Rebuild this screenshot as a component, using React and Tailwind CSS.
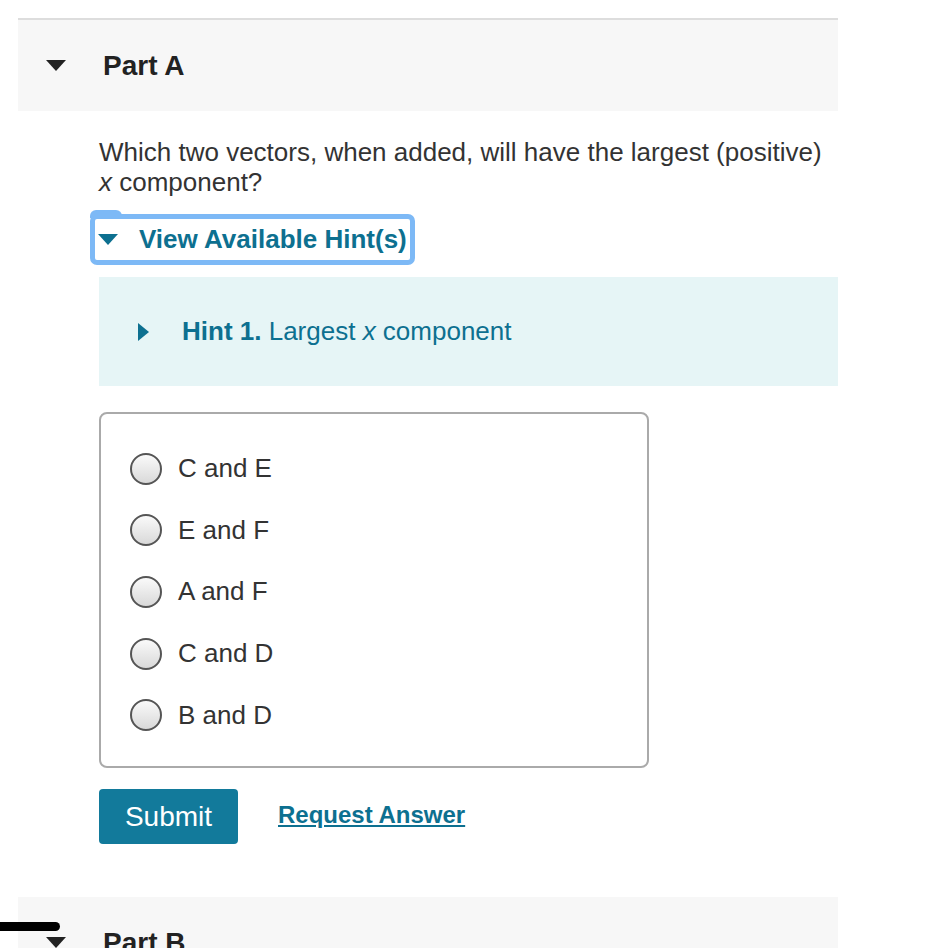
const font = { fontFamily: '"Liberation Sans", Arial, sans-serif' };

const DownTri = ({ className = "" }) => (
  <svg width="20" height="11" viewBox="0 0 20 11" className={className}>
    <path d="M0 0 L20 0 L10 11 Z" fill="currentColor" />
  </svg>
);

const RightTri = () => (
  <svg width="11" height="18" viewBox="0 0 11 18">
    <path d="M0 0 L11 9 L0 18 Z" fill="currentColor" />
  </svg>
);

const choices = ["C and E", "E and F", "A and F", "C and D", "B and D"];

const PartHeader = ({ label }) => (
  <div className="flex items-center h-[91px] bg-[#f7f7f7]">
    <div className="w-[85px] pl-[28px] text-[#222]">
      <DownTri />
    </div>
    <span className="text-[28px] font-bold text-[#222]">{label}</span>
  </div>
);

export default function App() {
  return (
    <div className="relative bg-white w-[939px] h-[948px] overflow-hidden" style={font}>
      <div className="ml-[18px] w-[820px] mt-[18px] border-t-2 border-[#dddddd]">
        <PartHeader label="Part A" />

        <div className="pl-[81px]">
          <p className="mt-[26px] text-[26px] leading-[30px] text-[#333]">
            Which two vectors, when added, will have the largest (positive)
            <br />
            <i>x</i> component?
          </p>

          <div className="mt-[17px] relative inline-flex items-center h-[51px] -ml-[9px] pl-[3px] pr-[3px] rounded-[7px] border-[5px] border-[#7db9f6] text-[#0d7090]">
            <div className="absolute -left-[5px] -top-[9px] w-[32px] h-[8px] rounded-t-[6px] bg-[#7db9f6]" />
            <DownTri />
            <span className="ml-[21px] text-[26px] font-bold">View Available Hint(s)</span>
          </div>

          <div className="mt-[12px] h-[109px] bg-[#e6f5f6] flex items-center pl-[39px] text-[#0d7090]">
            <RightTri />
            <span className="ml-[33px] text-[26px]">
              <b>Hint 1.</b> Largest <i>x</i> component
            </span>
          </div>

          <div className="mt-[26px] w-[550px] h-[356px] border-2 border-[#aaaaaa] rounded-[8px] pt-[24px] pl-[29px]">
            {choices.map((c) => (
              <div key={c} className="flex items-center h-[61.6px]">
                <span className="w-[32px] h-[32px] rounded-full border-2 border-[#555] bg-gradient-to-b from-[#fafafa] to-[#d9d9d9]" />
                <span className="ml-[16px] text-[26px] text-[#333]">{c}</span>
              </div>
            ))}
          </div>

          <div className="mt-[21px] flex items-center">
            <button className="w-[139px] h-[55px] rounded-[4px] bg-[#127a9b] text-white text-[28px]">
              Submit
            </button>
            <a className="ml-[40px] -mt-[4px] text-[24px] font-bold text-[#0d7090] underline">
              Request Answer
            </a>
          </div>
        </div>

        <div className="mt-[53px]">
          <PartHeader label="Part B" />
        </div>
      </div>

      <div className="absolute left-0 top-[922px] w-[60px] h-[9px] rounded-r-full bg-black" />
    </div>
  );
}
